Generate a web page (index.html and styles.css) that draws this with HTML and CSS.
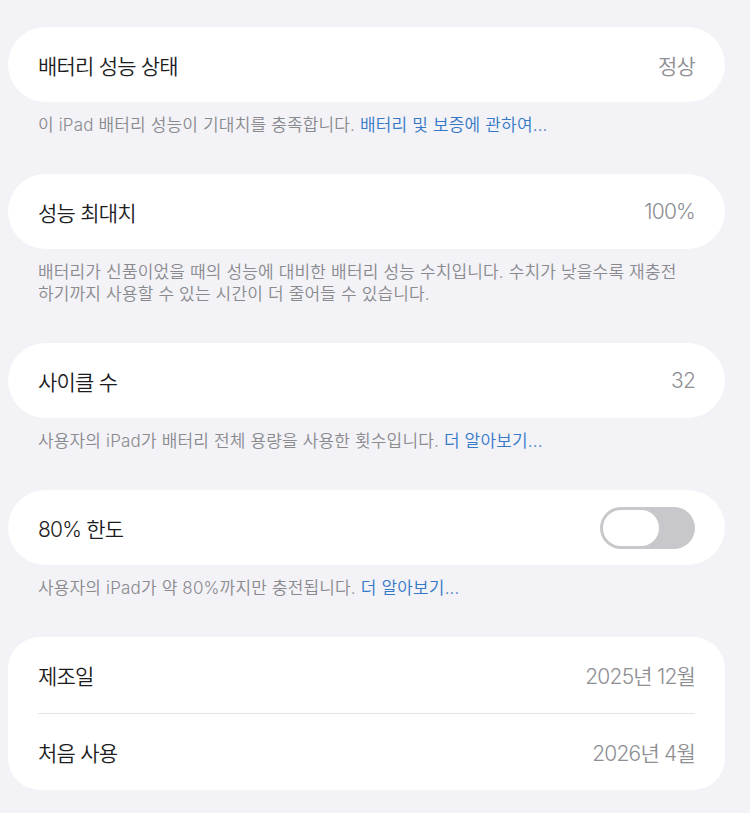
FILE: index.html
```html
<!DOCTYPE html>
<html lang="ko">
<head>
    <meta charset="UTF-8">
    <meta name="viewport" content="width=device-width, initial-scale=1.0">
    <title>배터리 성능 상태</title>
    <link rel="stylesheet" href="styles.css">
</head>
<body>

    <div class="page">
        <div class="section">
            <div class="card">
                <div class="row">
                    <span class="label">배터리 성능 상태</span>
                    <span class="value">정상</span>
                </div>
            </div>
            <p class="note">이 iPad 배터리 성능이 기대치를 충족합니다. <a href="#">배터리 및 보증에 관하여...</a></p>
        </div>

        <div class="section">
            <div class="card">
                <div class="row">
                    <span class="label">성능 최대치</span>
                    <span class="value">100%</span>
                </div>
            </div>
            <p class="note">배터리가 신품이었을 때의 성능에 대비한 배터리 성능 수치입니다. 수치가 낮을수록 재충전 하기까지 사용할 수 있는 시간이 더 줄어들 수 있습니다.</p>
        </div>

        <div class="section">
            <div class="card">
                <div class="row">
                    <span class="label">사이클 수</span>
                    <span class="value">32</span>
                </div>
            </div>
            <p class="note">사용자의 iPad가 배터리 전체 용량을 사용한 횟수입니다. <a href="#">더 알아보기...</a></p>
        </div>

        <div class="section">
            <div class="card">
                <div class="row">
                    <span class="label">80% 한도</span>
                    <span class="switch"><span class="knob"></span></span>
                </div>
            </div>
            <p class="note">사용자의 iPad가 약 80%까지만 충전됩니다. <a href="#">더 알아보기...</a></p>
        </div>

        <div class="section">
            <div class="card group">
                <div class="row">
                    <span class="label">제조일</span>
                    <span class="value">2025년 12월</span>
                </div>
                <div class="row">
                    <span class="label">처음 사용</span>
                    <span class="value">2026년 4월</span>
                </div>
            </div>
        </div>
    </div>

</body>
</html>
```

FILE: styles.css
```css
* {
  margin: 0;
  padding: 0;
  box-sizing: border-box;
}
body {
    font-family: Inter, "Noto Sans CJK KR", sans-serif;
    background-color: #f2f2f7;
    color: #1c1c1e;
}
.page {
    padding: 27px 25px 0 8px;
}
.section {
    margin-bottom: 38px;
}
.card {
    background: white;
    border-radius: 38px;
}
.card.group {
    border-radius: 32px;
}
.row {
    height: 75px;
    display: flex;
    align-items: center;
    justify-content: space-between;
    padding: 0 30px;
    font-size: 21px;
    font-weight: 350;
    letter-spacing: -0.8px;
}
.group .row + .row {
    height: 77px;
    border-top: 1px solid #e3e3e8;
    margin: 0 30px;
    padding: 0;
}
.group .row:first-child {
    height: 76px;
}
.value {
    color: #8e8e93;
}
.switch {
    width: 95px;
    height: 42px;
    padding: 3px;
    border-radius: 21px;
    background: #c8c8cc;
    display: flex;
}
.knob {
    width: 56px;
    height: 36px;
    border-radius: 18px;
    background: white;
}
.note {
    padding: 12px 30px 0 30px;
    font-size: 17px;
    font-weight: 350;
    line-height: 22px;
    letter-spacing: 0.15px;
    word-break: keep-all;
    color: #8a8a8e;
}
.note a {
    color: #3478c6;
    text-decoration: none;
}
```
